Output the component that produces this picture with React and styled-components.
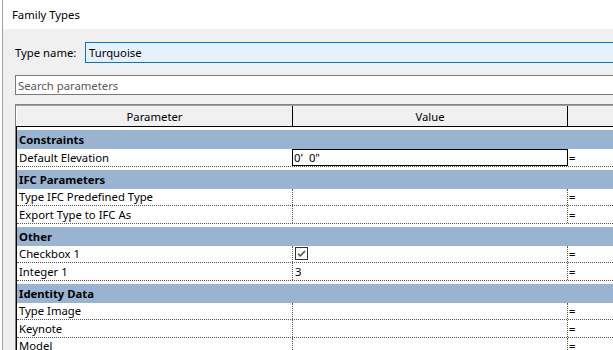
import styled, { createGlobalStyle } from "styled-components"

// Global
const GlobalStyle = createGlobalStyle`
  html, body {
    margin: 0;
    padding: 0;
    background: #ffffff;
    overflow: hidden;
  }
  body {
    font-family: "Noto Sans", "Open Sans", sans-serif;
    font-size: 11.3px;
    color: #000000;
  }
`

// Styled Components
const Window = styled.div`
  margin-left: 2px;
  width: 760px;
  min-height: 350px;
  border-left: 1px solid #a0a0a0;
  display: flex;
  flex-direction: column;
`

const TitleBar = styled.div`
  height: 29px;
  flex: none;
  padding-left: 9px;
  display: flex;
  align-items: center;
  background: #ffffff;
`

const Content = styled.div`
  flex: 1;
  background: #f0f0f0;
  padding: 13px 0 0 12px;
  display: flex;
  flex-direction: column;
`

const TypeRow = styled.div`
  flex: none;
  display: flex;
  align-items: center;
  height: 21px;
`

const Label = styled.span`
  width: 70px;
`

const TypeInput = styled.div`
  flex: 1;
  height: 19px;
  border: 1px solid #0078d7;
  background: #e5f1fb;
  padding-left: 3px;
  display: flex;
  align-items: center;
`

const SearchBox = styled.div`
  flex: none;
  margin-top: 12px;
  height: 18px;
  border: 1px solid #7a7a7a;
  background: #ffffff;
  padding-left: 2px;
  display: flex;
  align-items: center;
  color: #5a5a5a;
`

const Table = styled.div`
  margin-top: 9px;
  flex: 1;
  border-top: 1px solid #828282;
  border-left: 1px solid #828282;
  background: #ffffff;
  display: flex;
  flex-direction: column;
`

const HeaderRow = styled.div`
  flex: none;
  display: flex;
  height: 20px;
  border-top: 1px solid #a0a0a0;
  border-bottom: 1px solid #000000;
  background: #f0f0f0;
`

const HeaderCell = styled.div`
  width: ${({ $w }) => ($w ? `${$w}px` : "auto")};
  flex: ${({ $w }) => ($w ? "none" : "1")};
  box-sizing: border-box;
  border-left: ${({ $first }) => ($first ? "1px solid #ffffff" : "none")};
  border-right: 1px solid #000000;
  display: flex;
  align-items: center;
  justify-content: center;
`

const Body = styled.div`
  flex: 1;
  border-left: 1px solid #000000;
  display: flex;
  flex-direction: column;
`

const GroupRow = styled.div`
  margin-top: 4px;
  height: 19px;
  flex: none;
  background: #99b4d1;
  font-weight: bold;
  padding-left: 2px;
  display: flex;
  align-items: center;

  &:first-child {
    margin-top: 3px;
  }
`

const DataRow = styled.div`
  height: 17.5px;
  flex: none;
  box-sizing: border-box;
  border-bottom: 1px dotted #555555;
  display: flex;
`

const NameCell = styled.div`
  width: 276px;
  flex: none;
  box-sizing: border-box;
  border-right: 1px dotted #555555;
  padding-left: 2px;
  display: flex;
  align-items: center;
  white-space: nowrap;
`

const ValueCell = styled.div`
  width: ${({ $editing }) => ($editing ? "276px" : "275px")};
  margin-left: ${({ $editing }) => ($editing ? "-1px" : "0")};
  flex: none;
  box-sizing: border-box;
  border: ${({ $editing }) => ($editing ? "1px solid #000000" : "none")};
  border-right: ${({ $editing }) =>
    $editing ? "1px solid #000000" : "1px dotted #555555"};
  padding-left: ${({ $editing }) => ($editing ? "1px" : "2px")};
  display: flex;
  align-items: center;
  white-space: pre;
`

const FormulaCell = styled.div`
  flex: 1;
  padding-left: 1px;
  display: flex;
  align-items: center;
  font-weight: 600;
`

const Check = () => (
  <svg width="13" height="13" viewBox="0 0 13 13">
    <rect x="0.5" y="0.5" width="12" height="12" fill="#ffffff" stroke="#333333" />
    <path d="M3 6.8 L5.3 8.9 L10 4" fill="none" stroke="#5a5a5a" strokeWidth="1.6" />
  </svg>
)

const groups = [
  {
    title: "Constraints",
    rows: [{ name: "Default Elevation", value: "0'  0\"", editing: true }],
  },
  {
    title: "IFC Parameters",
    rows: [{ name: "Type IFC Predefined Type" }, { name: "Export Type to IFC As" }],
  },
  {
    title: "Other",
    rows: [{ name: "Checkbox 1", check: true }, { name: "Integer 1", value: "3" }],
  },
  {
    title: "Identity Data",
    rows: [{ name: "Type Image" }, { name: "Keynote" }, { name: "Model" }],
  },
]

export default function App() {
  return (
    <>
      <GlobalStyle />
      <Window>
        <TitleBar>Family Types</TitleBar>
        <Content>
          <TypeRow>
            <Label>Type name:</Label>
            <TypeInput>Turquoise</TypeInput>
          </TypeRow>
          <SearchBox>Search parameters</SearchBox>
          <Table>
            <HeaderRow>
              <HeaderCell $w={277} $first>
                Parameter
              </HeaderCell>
              <HeaderCell $w={275}>Value</HeaderCell>
              <HeaderCell />
            </HeaderRow>
            <Body>
              {groups.map((group) => (
                <div key={group.title} style={{ display: "contents" }}>
                  <GroupRow>{group.title}</GroupRow>
                  {group.rows.map((row) => (
                    <DataRow key={row.name}>
                      <NameCell>{row.name}</NameCell>
                      <ValueCell $editing={row.editing}>
                        {row.check ? <Check /> : row.value}
                      </ValueCell>
                      <FormulaCell>=</FormulaCell>
                    </DataRow>
                  ))}
                </div>
              ))}
            </Body>
          </Table>
        </Content>
      </Window>
    </>
  )
}
